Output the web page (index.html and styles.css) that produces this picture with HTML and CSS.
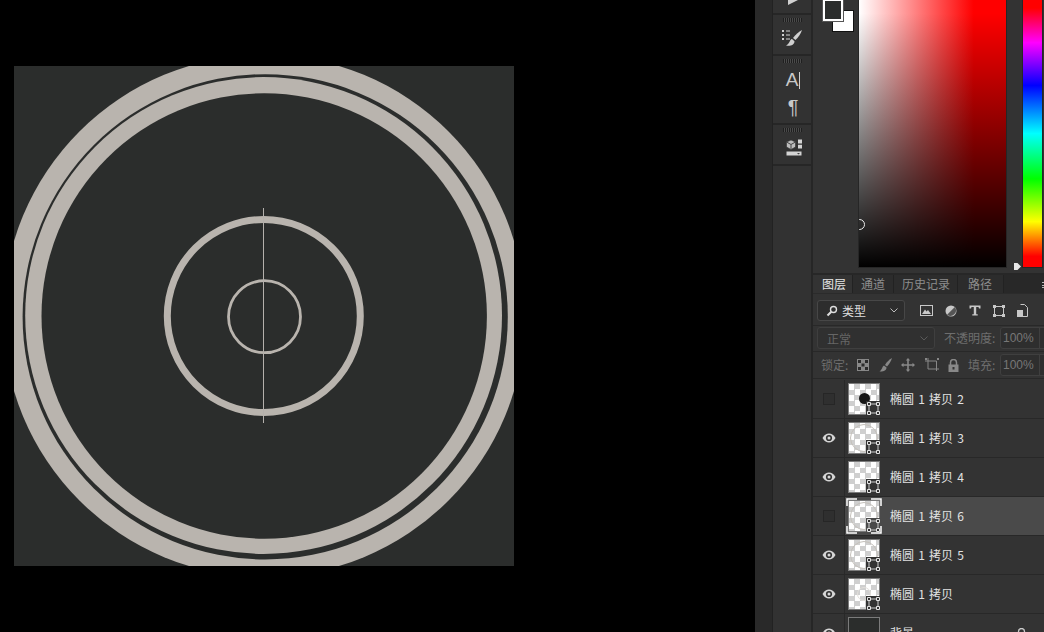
FILE: index.html
```html
<!DOCTYPE html>
<html>

<head>
    <meta charset="utf-8">
    <link rel="stylesheet" href="styles.css">
</head>

<body>
    <svg class="defs" width="0" height="0">
        <symbol id="eye" viewBox="0 0 14 10">
            <path d="M0.5 5C2.5 1.6 4.6 0.5 7 0.5S11.500 1.600 13.500 5C11.500 8.400 9.400 9.500 7 9.500S2.500 8.400 0.500 5Z" fill="#d6d6d6" />
            <circle cx="7" cy="5" r="3.100" fill="#333" />
            <circle cx="7" cy="5" r="1.500" fill="#d6d6d6" />
        </symbol>
        <symbol id="badge" viewBox="0 0 14 14">
            <path d="M3 3H12V12H3Z" fill="none" stroke="#d0d0d0" />
            <path d="M1.500 1.500H4.500V4.500H1.500ZM10.500 1.500H13.500V4.500H10.500ZM1.500 10.500H4.500V13.500H1.500ZM10.500 10.500H13.500V13.500H10.500Z" fill="#333" stroke="#e4e4e4" />
        </symbol>
    </svg>

    <div class="stage">
        <svg class="canvas" width="500" height="500" viewBox="14 66 500 500">
            <rect x="14" y="66" width="500" height="500" fill="#2b2d2c" />
            <circle cx="264" cy="316" r="261" fill="#b9b4ae" />
            <circle cx="265.200" cy="316.800" r="242.600" fill="#2b2d2c" />
            <circle cx="263.600" cy="315.500" r="238.400" fill="#b9b4ae" />
            <circle cx="264.200" cy="316" r="222.700" fill="#2b2d2c" />
            <circle cx="263.800" cy="316" r="96.500" fill="none" stroke="#b9b4ae" stroke-width="7" />
            <circle cx="264.500" cy="316.700" r="36" fill="none" stroke="#b9b4ae" stroke-width="2.800" />
            <rect x="263" y="208" width="1" height="215" fill="#b4b0ac" />
        </svg>
    </div>

    <div class="dock"></div>

    <div class="tools">
        <div class="tool-group first">
            <svg class="play" width="10" height="6" viewBox="0 0 10 6"><path d="M0 0H10L0 5Z" fill="#d0d0d0" /></svg>
        </div>
        <div class="tool-group">
            <div class="grip"></div>
            <svg class="tool-icon" width="22" height="18" viewBox="0 0 22 18">
                <path d="M1 1H3V3H1ZM1 5H3V7H1ZM1 9H3V11H1ZM5 1.500H9V2.500H5ZM5 5.500H9V6.500H5ZM5 9.500H9V10.500H5Z" fill="#cfcfcf" />
                <path d="M21 1C18 2.500 14 6 12 9L14.500 11C17 8.500 20 4.500 21 1Z" fill="#cfcfcf" />
                <path d="M11 10C8.500 10.500 9 14.500 5 16.500C9 17.500 13.500 16 13.500 12.200Z" fill="#cfcfcf" />
            </svg>
        </div>
        <div class="tool-group tall">
            <div class="grip"></div>
            <div class="type-tool"><span class="type-a">A</span><span class="type-bar"></span></div>
            <div class="type-para">¶</div>
        </div>
        <div class="tool-group">
            <div class="grip"></div>
            <svg class="tool-icon cube" width="18" height="18" viewBox="0 0 18 18">
                <path d="M5 1L9.500 3V8L5 10.500L0.500 8V3Z" fill="#bdbdbd" stroke="#333" stroke-width="0.600" />
                <path d="M5 5.500V10.500M0.500 3L5 5.500L9.500 3" stroke="#444" fill="none" />
                <path d="M12 0.500H16V4.500H12ZM12 5.800H16V9.500H12ZM0.500 12.500H15.500V16.500H0.500Z" fill="#d4d4d4" />
                <path d="M11 14H14L12.500 15.500Z" fill="#444" />
            </svg>
        </div>
    </div>

    <div class="panels">
        <div class="picker">
            <div class="swatch-bg"></div>
            <div class="swatch-fg"></div>
            <div class="ramp">
                <div class="ramp-dark"></div>
                <div class="ramp-dot"></div>
            </div>
            <div class="slider-mark"></div>
            <div class="hue"></div>
        </div>

        <div class="tabs">
            <div class="tab active">图层</div>
            <div class="tab">通道</div>
            <div class="tab">历史记录</div>
            <div class="tab">路径</div>
            <div class="tab-menu"></div>
        </div>

        <div class="opt-row filter-row">
            <div class="select">
                <svg width="12" height="12" viewBox="0 0 12 12">
                    <circle cx="7.500" cy="4.500" r="3" fill="none" stroke="#ddd" stroke-width="1.400" />
                    <path d="M5.300 6.700L1.500 10.500" stroke="#ddd" stroke-width="2" />
                </svg>
                <span class="select-text">类型</span>
                <svg class="chev" width="8" height="5" viewBox="0 0 8 5"><path d="M0.500 0.500L4 4L7.500 0.500" fill="none" stroke="#bbb" /></svg>
            </div>
            <div class="filter-icons">
                <svg width="13" height="11" viewBox="0 0 13 11">
                    <rect x="0.500" y="0.500" width="12" height="10" fill="none" stroke="#c8c8c8" />
                    <path d="M2 9L5 4.500L6.500 6.500L8 5L11 9Z" fill="#c8c8c8" />
                </svg>
                <svg width="12" height="12" viewBox="0 0 12 12">
                    <circle cx="6" cy="6" r="5.500" fill="#c8c8c8" />
                    <path d="M9.800 2.100A5.500 5.500 0 0 1 2.100 9.800Z" fill="#555" />
                </svg>
                <svg width="12" height="11" viewBox="0 0 12 11">
                    <path d="M0.500 0.500H11.500V3.500H10L9.500 2H7.200V9.300H8.700V10.500H3.300V9.300H4.800V2H2.500L2 3.500H0.500Z" fill="#c8c8c8" />
                </svg>
                <svg width="12" height="12" viewBox="0 0 12 12">
                    <path d="M1.500 1.500H10.500V10.500H1.500Z" fill="none" stroke="#c8c8c8" />
                    <path d="M0 0H3V3H0ZM9 0H12V3H9ZM0 9H3V12H0ZM9 9H12V12H9Z" fill="#c8c8c8" />
                </svg>
                <svg width="11" height="13" viewBox="0 0 11 13">
                    <path d="M3.500 0.500H7.500L10.500 3.500V12.500H3.500" fill="none" stroke="#c8c8c8" />
                    <rect x="0" y="6" width="6" height="7" fill="#c8c8c8" />
                </svg>
            </div>
        </div>

        <div class="opt-row blend-row">
            <div class="select dim">
                <span class="select-text">正常</span>
                <svg class="chev" width="8" height="5" viewBox="0 0 8 5"><path d="M0.500 0.500L4 4L7.500 0.500" fill="none" stroke="#5a5a5a" /></svg>
            </div>
            <span class="dim-label opacity-label">不透明度:</span>
            <div class="num-box">100%</div>
        </div>

        <div class="opt-row lock-row">
            <span class="dim-label lock-label">锁定:</span>
            <div class="lock-icons">
                <svg width="12" height="12" viewBox="0 0 12 12">
                    <rect width="12" height="12" fill="#888" />
                    <path d="M1 1H4V4H1ZM8 1H11V4H8ZM4.500 4.500H7.500V7.500H4.500ZM1 8H4V11H1ZM8 8H11V11H8Z" fill="#2b2b2b" />
                </svg>
                <svg width="13" height="14" viewBox="0 0 13 14">
                    <path d="M13 0C10.500 1.500 7.500 4 6 7L8 8.500C10 6.500 12 3.500 13 0Z" fill="#888" />
                    <path d="M5 7.500C3 8.500 3.500 11.500 0.500 13.500C4 14 7.500 12.500 7.500 9.500Z" fill="#888" />
                </svg>
                <svg width="14" height="14" viewBox="0 0 14 14">
                    <path d="M7 0L9.200 2.500H7.800V6.200H11.500V4.800L14 7L11.500 9.200V7.800H7.800V11.500H9.200L7 14L4.800 11.500H6.200V7.800H2.500V9.200L0 7L2.500 4.800V6.200H6.200V2.500H4.800Z" fill="#888" />
                </svg>
                <svg width="14" height="14" viewBox="0 0 14 14">
                    <path d="M0 3H11.500V13M3 0V11H14" fill="none" stroke="#888" />
                    <path d="M0 0H2V2H0ZM12 0H14V2H12Z" fill="#888" />
                </svg>
                <svg width="11" height="13" viewBox="0 0 11 13">
                    <path d="M2.500 6V3.500A3 3 0 0 1 8.500 3.500V6" fill="none" stroke="#888" stroke-width="1.500" />
                    <path d="M0.500 5.500H10.500V13H0.500Z" fill="#888" />
                    <rect x="4.500" y="8" width="2" height="2.500" fill="#333" />
                </svg>
            </div>
            <span class="dim-label fill-label">填充:</span>
            <div class="num-box">100%</div>
        </div>

        <div class="layers">
            <div class="layer">
                <div class="vis"><div class="off"></div></div>
                <div class="thumb">
                    <div class="thumb-dot"></div>
                    <svg class="thumb-badge" width="14" height="14"><use href="#badge" /></svg>
                </div>
                <div class="layer-name">椭圆 1 拷贝 2</div>
            </div>
            <div class="layer">
                <div class="vis"><svg width="14" height="10"><use href="#eye" /></svg></div>
                <div class="thumb">
                    <div class="thumb-ring"></div>
                    <svg class="thumb-badge" width="14" height="14"><use href="#badge" /></svg>
                </div>
                <div class="layer-name">椭圆 1 拷贝 3</div>
            </div>
            <div class="layer">
                <div class="vis"><svg width="14" height="10"><use href="#eye" /></svg></div>
                <div class="thumb">
                    <svg class="thumb-badge" width="14" height="14"><use href="#badge" /></svg>
                </div>
                <div class="layer-name">椭圆 1 拷贝 4</div>
            </div>
            <div class="layer selected">
                <div class="vis"><div class="off"></div></div>
                <div class="thumb picked">
                    <div class="thumb-ring"></div>
                    <svg class="thumb-badge" width="14" height="14"><use href="#badge" /></svg>
                    <svg class="brackets" width="36" height="36" viewBox="0 0 36 36">
                        <path d="M1 8V1H11M25 1H35V8M35 28V35H25M11 35H1V28" fill="none" stroke="#fff" stroke-width="1.500" />
                    </svg>
                </div>
                <div class="layer-name">椭圆 1 拷贝 6</div>
            </div>
            <div class="layer">
                <div class="vis"><svg width="14" height="10"><use href="#eye" /></svg></div>
                <div class="thumb">
                    <div class="thumb-ring"></div>
                    <svg class="thumb-badge" width="14" height="14"><use href="#badge" /></svg>
                </div>
                <div class="layer-name">椭圆 1 拷贝 5</div>
            </div>
            <div class="layer">
                <div class="vis"><svg width="14" height="10"><use href="#eye" /></svg></div>
                <div class="thumb">
                    <div class="thumb-arc"></div>
                    <svg class="thumb-badge" width="14" height="14"><use href="#badge" /></svg>
                </div>
                <div class="layer-name">椭圆 1 拷贝</div>
            </div>
            <div class="layer">
                <div class="vis"><svg width="14" height="10"><use href="#eye" /></svg></div>
                <div class="thumb plain"></div>
                <div class="layer-name">背景</div>
                <svg class="bg-lock" width="11" height="13" viewBox="0 0 11 13">
                    <path d="M2.500 6V3.500A3 3 0 0 1 8.500 3.500V6" fill="none" stroke="#ccc" stroke-width="1.300" />
                    <path d="M0.500 5.500H10.500V13H0.500Z" fill="#ccc" />
                </svg>
            </div>
        </div>
    </div>
</body>

</html>
```

FILE: styles.css
```css
* {
    box-sizing: border-box;
}

html,
body {
    margin: 0;
    padding: 0;
    height: 632px;
    overflow: hidden;
}

body {
    display: flex;
    background: #000;
    color: #ddd;
    font-family: "Noto Sans CJK SC", "Noto Sans", sans-serif;
    font-size: 12px;
}

.defs {
    position: absolute;
}

.stage {
    width: 755px;
    flex: none;
    background: #000;
    padding: 66px 0 0 14px;
}

.canvas {
    display: block;
}

.dock {
    width: 18px;
    flex: none;
    background: #292929;
    border-right: 1px solid #222;
}

.tools {
    width: 40px;
    flex: none;
    background: #323232;
    border-right: 2px solid #262626;
    display: flex;
    flex-direction: column;
}

.tool-group {
    height: 41px;
    border-bottom: 2px solid #262626;
    display: flex;
    flex-direction: column;
    align-items: center;
    padding-top: 3px;
}

.tool-group.first {
    height: 15px;
    padding-top: 0;
}

.tool-group.tall {
    height: 69px;
}

.play {
    display: block;
    margin-left: 2px;
}

.grip {
    width: 19px;
    height: 4px;
    background: repeating-linear-gradient(to right, #1f1f1f 0, #1f1f1f 1px, #4a4a4a 1px, #4a4a4a 2px);
}

.tool-icon {
    display: block;
    margin-top: 7px;
}

.tool-icon.cube {
    margin-left: 5px;
}

.type-tool {
    display: flex;
    align-items: center;
    margin: 7px 0 0 2px;
    height: 20px;
}

.type-a {
    font-family: "Liberation Sans", sans-serif;
    font-size: 19px;
    line-height: 20px;
    color: #c8c8c8;
}

.type-bar {
    width: 1px;
    height: 17px;
    margin-left: 1px;
    background: #d0d0d0;
}

.type-para {
    font-family: "Liberation Sans", sans-serif;
    font-size: 20px;
    line-height: 20px;
    color: #c8c8c8;
    margin: 7px 0 0 2px;
}

.panels {
    flex: 1;
    min-width: 0;
    overflow: hidden;
    background: #333;
    display: flex;
    flex-direction: column;
}

.picker {
    height: 275px;
    flex: none;
    position: relative;
    display: flex;
    padding-left: 46px;
    border-bottom: 2px solid #272727;
}

.swatch-fg {
    position: absolute;
    left: 10px;
    top: -1px;
    width: 20px;
    height: 22px;
    background: #2b2d2c;
    border: 2px solid #fff;
    box-shadow: 0 0 0 1px #555;
}

.swatch-bg {
    position: absolute;
    left: 20px;
    top: 11px;
    width: 20px;
    height: 20px;
    background: #fff;
    box-shadow: 0 0 0 1px #111;
}

.ramp {
    position: relative;
    width: 147px;
    height: 267px;
    flex: none;
    overflow: hidden;
    background: linear-gradient(to right, #fff 0, #f00 78%, #f00 100%);
    box-shadow: 0 0 0 1px #262626;
}

.ramp-dark {
    height: 100%;
    background: linear-gradient(to bottom, rgba(0, 0, 0, 0) 5%, #000 100%);
}

.ramp-dot {
    position: absolute;
    left: -5px;
    top: 219px;
    width: 11px;
    height: 11px;
    border: 1px solid #eee;
    border-radius: 50%;
}

.slider-mark {
    width: 7px;
    height: 7px;
    flex: none;
    margin: 263px 0 0 8px;
    background: #e8e8e8;
    clip-path: polygon(0 0, 50% 0, 100% 50%, 50% 100%, 0 100%);
}

.hue {
    width: 19px;
    height: 267px;
    flex: none;
    margin-left: 2px;
    background: linear-gradient(to bottom, #f00 0, #f00 3%, #f0f 16%, #00f 32%, #0ff 50%, #0f0 67%, #ff0 83%, #f00 96%, #f00 100%);
    box-shadow: 0 0 0 1px #262626;
}

.tabs {
    height: 19px;
    flex: none;
    display: flex;
    background: #282828;
    border-bottom: 1px solid #2b2b2b;
    position: relative;
}

.tab {
    padding: 0 9px;
    line-height: 17px;
    color: #8d8d8d;
    border-right: 1px solid #222;
    background: #2c2c2c;
    white-space: nowrap;
}

.tab:nth-child(1) {
    width: 40px;
    padding-left: 9px;
}

.tab:nth-child(2) {
    width: 41px;
    padding-left: 8px;
}

.tab:nth-child(3) {
    width: 64px;
    padding-left: 8px;
}

.tab:nth-child(4) {
    width: 46px;
    padding-left: 10px;
}

.tab.active {
    background: #333;
    color: #e6e6e6;
}

.tab-menu {
    position: absolute;
    right: -3px;
    top: 7px;
    width: 5px;
    height: 6px;
    border-top: 1px solid #bbb;
    border-bottom: 1px solid #bbb;
    background: linear-gradient(#bbb, #bbb) center / 100% 1px no-repeat;
}

.opt-row {
    flex: none;
    display: flex;
    align-items: center;
    border-bottom: 1px solid #282828;
    padding-left: 4px;
}

.filter-row {
    height: 32px;
    align-items: flex-start;
    padding-top: 6px;
}

.blend-row {
    height: 26px;
    align-items: flex-start;
    padding-top: 1px;
}

.lock-row {
    height: 27px;
    padding-left: 8px;
}

.select {
    width: 88px;
    height: 21px;
    flex: none;
    display: flex;
    align-items: center;
    padding: 0 6px 0 8px;
    background: #2d2d2d;
    border: 1px solid #474747;
    border-radius: 3px;
}

.select-text {
    margin-left: 4px;
    color: #ddd;
}

.chev {
    margin-left: auto;
}

.select.dim {
    width: 118px;
    height: 22px;
    border-color: #3f3f3f;
    background: #303030;
}

.select.dim .select-text {
    margin-left: 1px;
    color: #666;
}

.filter-icons {
    display: flex;
    align-items: center;
    height: 21px;
    margin-left: 15px;
    gap: 12px;
}

.dim-label {
    flex: none;
    color: #6e6e6e;
    white-space: nowrap;
}

.opacity-label {
    width: 56px;
    margin-left: 9px;
    line-height: 22px;
}

.lock-label {
    width: 36px;
    padding-bottom: 2px;
}

.lock-icons {
    display: flex;
    flex: none;
    align-items: center;
    gap: 9.500px;
    width: 111px;
}

.fill-label {
    width: 32px;
    padding-bottom: 2px;
}

.num-box {
    width: 60px;
    height: 22px;
    flex: none;
    line-height: 20px;
    padding-left: 2px;
    color: #777;
    background: #2e2e2e;
    border: 1px solid #3f3f3f;
    border-radius: 3px;
    font-family: "Liberation Sans", sans-serif;
    font-size: 12px;
    position: relative;
}

.num-box::after {
    content: "";
    position: absolute;
    left: 38px;
    top: 0;
    bottom: 0;
    width: 1px;
    background: #3f3f3f;
}

.layers {
    flex: 1;
    min-height: 0;
    padding-top: 1px;
}

.layer {
    height: 39px;
    display: flex;
    align-items: center;
    border-bottom: 1px solid #282828;
    position: relative;
}

.layer.selected {
    background: #4a4a4a;
}

.vis {
    width: 32px;
    height: 38px;
    flex: none;
    display: flex;
    align-items: center;
    justify-content: center;
    border-right: 1px solid #292929;
    background: #333;
}

.off {
    width: 12px;
    height: 12px;
    border: 1px solid #262626;
    background: #2f2f2f;
}

.thumb {
    width: 32px;
    height: 32px;
    flex: none;
    margin-left: 3px;
    position: relative;
    border: 1px solid #7b7b7b;
    background: conic-gradient(#cfcfcf 25%, #fff 0 50%, #cfcfcf 0 75%, #fff 0) 0 0 / 11px 11px;
}

.thumb.plain {
    background: #2b2d2c;
}

.thumb-dot {
    position: absolute;
    left: 10px;
    top: 9px;
    width: 11px;
    height: 11px;
    border-radius: 50%;
    background: #161616;
}

.thumb-ring {
    position: absolute;
    left: 1px;
    top: 1px;
    width: 28px;
    height: 28px;
    border-radius: 50%;
    border: 1px solid #c4c0ba;
}

.thumb-arc {
    position: absolute;
    left: 8px;
    top: 8px;
    width: 14px;
    height: 14px;
    border-radius: 50%;
    border: 1px solid #e2dfdb;
}

.thumb-badge {
    position: absolute;
    right: -1px;
    bottom: -1px;
    background: #333;
}

.selected .thumb-badge {
    background: #4a4a4a;
}

.brackets {
    position: absolute;
    left: -3px;
    top: -3px;
}

.layer-name {
    margin-left: 10px;
    padding-bottom: 2px;
    color: #e2e2e2;
    word-spacing: 1.500px;
    white-space: nowrap;
}

.bg-lock {
    position: absolute;
    left: 203px;
    top: 14px;
}
```
